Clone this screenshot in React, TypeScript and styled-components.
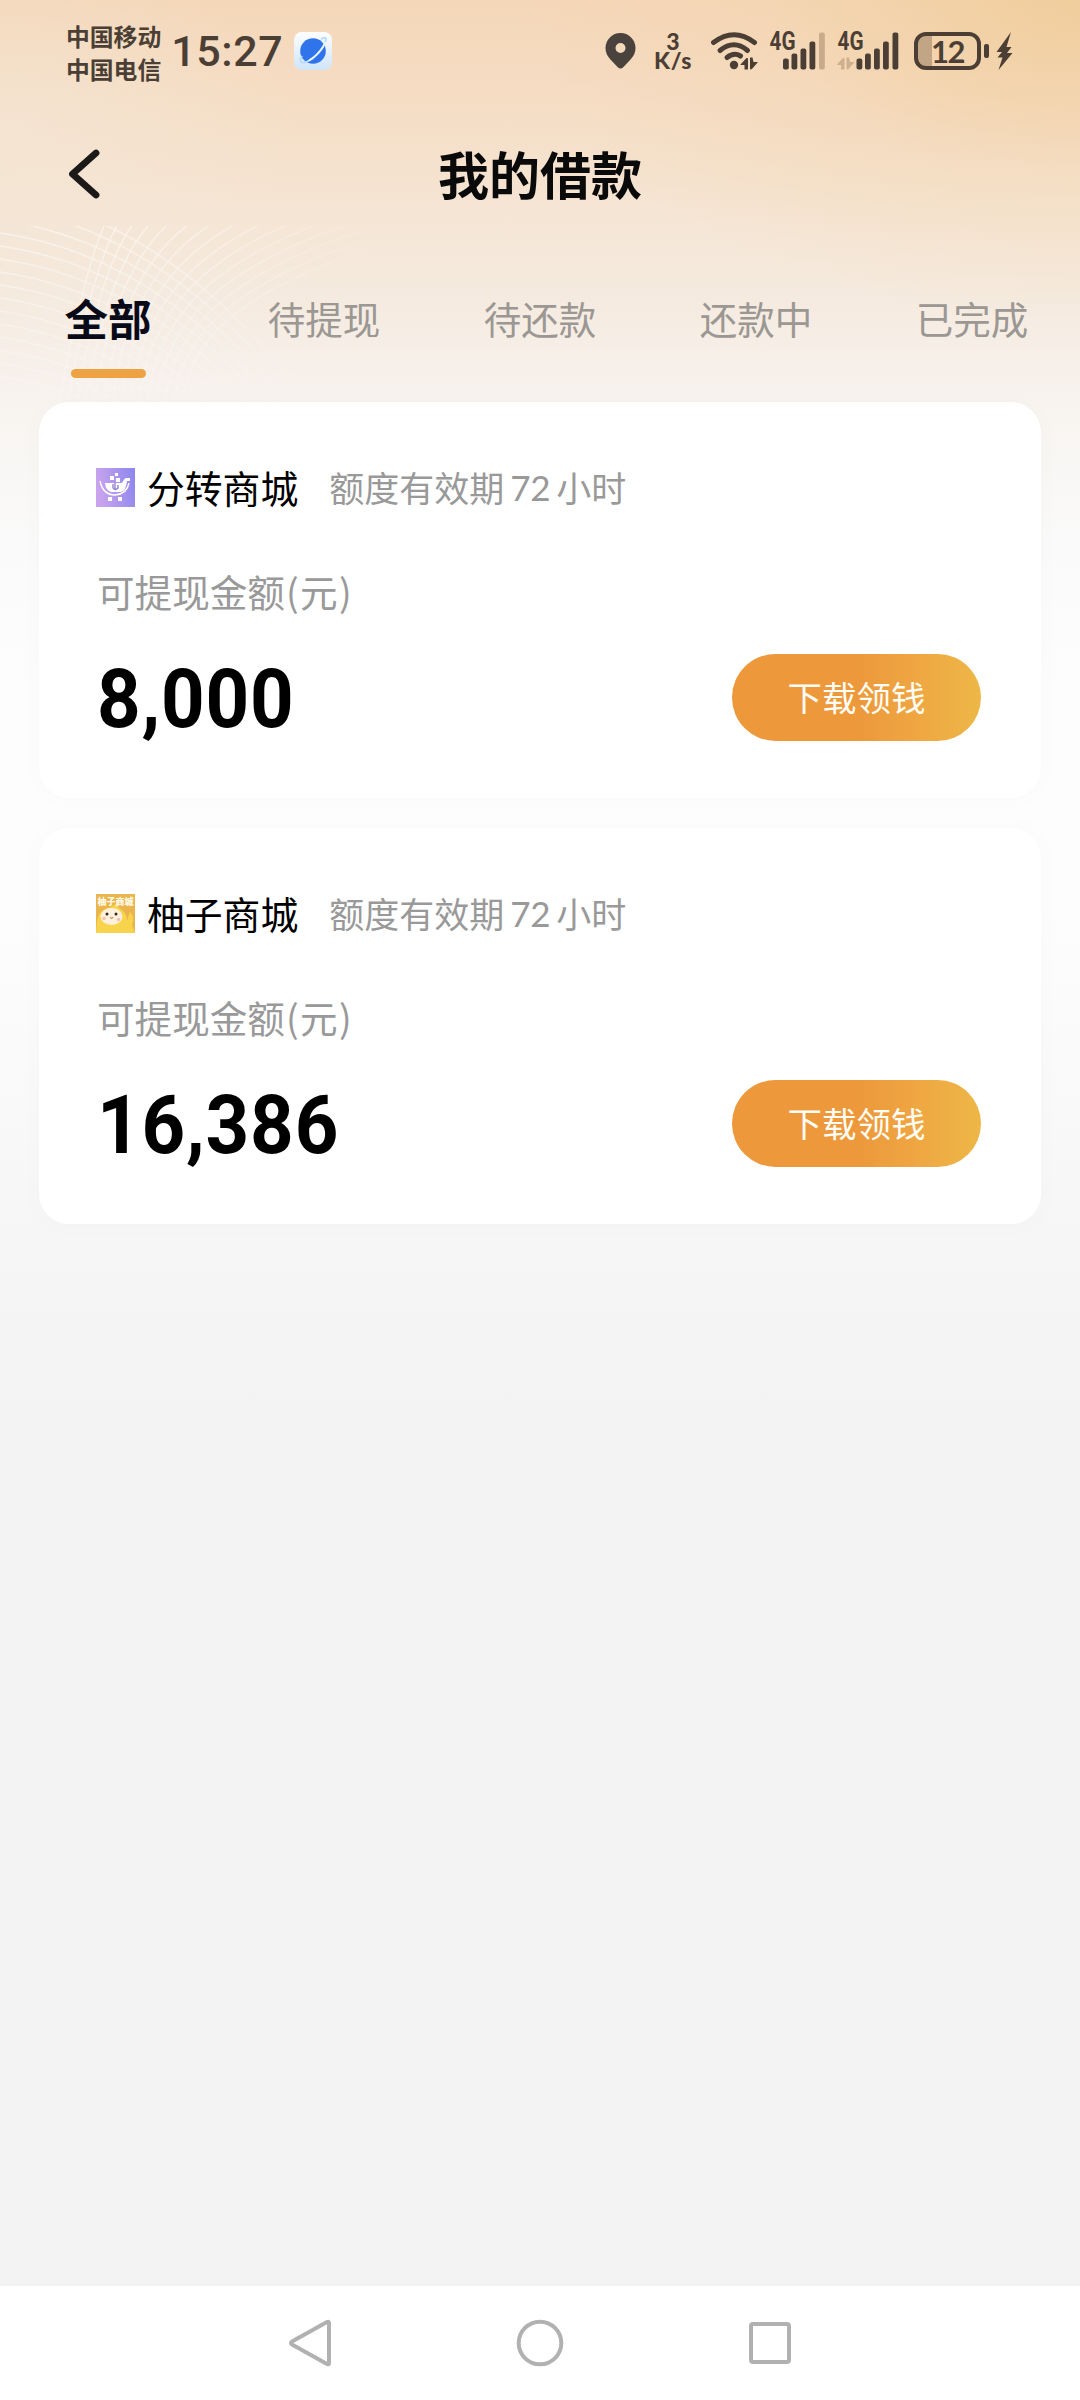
import React from "react";
import styled, { createGlobalStyle } from "styled-components";

const INK = "#4b3f35";
const CJK = `"Noto Sans CJK SC", sans-serif`;

const GlobalStyle = createGlobalStyle`
  * { box-sizing: border-box; }
  body { margin: 0; background: #f2f2f2; }
  button { border: 0; padding: 0; background: none; font: inherit; }
`;

const Screen = styled.div`
  position: relative;
  display: flex;
  flex-direction: column;
  width: 1080px;
  height: 2400px;
  overflow: hidden;
  font-family: ${CJK};
  background:
    radial-gradient(ellipse 560px 320px at 1080px 0, rgba(240, 203, 150, 0.8), rgba(242, 210, 168, 0.3) 55%, rgba(244, 220, 190, 0) 100%),
    radial-gradient(ellipse 300px 180px at 0 130px, rgba(243, 231, 215, 0.6), rgba(243, 231, 215, 0) 100%),
    linear-gradient(180deg, #f4d7b8 0, #f5dcc3 90px, #f5e2ce 170px, #f5e7d8 240px, #f5ebe1 310px, #f7f0ea 370px,
      #f8f5f1 420px, #fafafa 540px, #fdfdfd 700px, #fdfdfd 900px, #f9f9f9 1100px, #f6f6f6 1230px, #f3f3f3 1400px);
`;

const Waves = styled.svg`
  position: absolute;
  left: 0;
  top: 226px;
  pointer-events: none;
`;

const StatusBar = styled.header`
  position: relative;
  display: flex;
  align-items: center;
  height: 102px;
  padding: 0 67px 0 66px;
  color: ${INK};
`;

const Carriers = styled.div`
  display: flex;
  flex-direction: column;
  font-size: 23.8px;
  line-height: 33px;
  font-weight: 700;
  padding-top: 2px;
`;

const Clock = styled.time`
  margin-left: 10px;
  width: 113px;
  font-family: Roboto, sans-serif;
  font-size: 43px;
  line-height: 50px;
  font-weight: 500;
  letter-spacing: 0.6px;
`;

const BrowserIcon = styled.svg`
  margin-left: 10px;
`;

const StatusIcons = styled.div`
  display: flex;
  align-items: center;
  margin-left: auto;
`;

const Speed = styled.div`
  display: flex;
  flex-direction: column;
  align-items: center;
  width: 40px;
  margin: 0 18px 0 17px;
  font-family: Lato, sans-serif;
  font-weight: 900;
  font-size: 23px;
  line-height: 19px;
`;

const SpeedUnit = styled.span`
  letter-spacing: 0.6px;
`;

const SignalIcon = styled.svg`
  margin: -8px 0 0;

  & + & {
    margin-left: 6px;
  }
`;

const SignalLabel = styled.text`
  font-family: Roboto, sans-serif;
  font-weight: 700;
  font-size: 25px;
`;

const WifiIcon = styled.svg`
  margin-right: 10px;
`;

const Battery = styled.div`
  display: flex;
  align-items: center;
  justify-content: center;
  width: 67px;
  height: 38px;
  margin-left: 15px;
  border: 4px solid ${INK};
  border-radius: 12px;
  background: linear-gradient(90deg, #c2a585 0 14px, transparent 14px);
  font-family: Lato, sans-serif;
  font-weight: 700;
  font-size: 31px;
  line-height: 30px;
  letter-spacing: -1.5px;
`;

const BatteryNub = styled.span`
  width: 5px;
  height: 14px;
  margin: 0 7px 0 3px;
  border-radius: 2px;
  background: ${INK};
`;

const TitleBar = styled.div`
  position: relative;
  display: grid;
  grid-template-columns: 120px 1fr 120px;
  align-items: center;
  height: 144px;
`;

const BackButton = styled.button`
  display: flex;
  justify-content: flex-end;
  width: 102px;
`;

const Title = styled.h1`
  margin: 0;
  padding-bottom: 3px;
  text-align: center;
  color: #0a0a0a;
  font-size: 51px;
  line-height: 70px;
  font-weight: 700;
`;

const Tabs = styled.nav`
  position: relative;
  display: grid;
  grid-template-columns: repeat(5, 216px);
  height: 156px;
`;

const Tab = styled.button<{ $active?: boolean }>`
  display: flex;
  flex-direction: column;
  align-items: center;
  justify-content: flex-start;
  padding-top: 42px;
  line-height: 60px;
  font-size: ${(p) => (p.$active ? 43.5 : 37.5)}px;
  font-weight: ${(p) => (p.$active ? 700 : 400)};
  color: ${(p) => (p.$active ? "#080a18" : "#9b9793")};

  &::after {
    content: "";
    display: ${(p) => (p.$active ? "block" : "none")};
    width: 75px;
    height: 9px;
    margin-top: 21px;
    border-radius: 5px;
    background: #eda344;
  }
`;

const LoanList = styled.main`
  position: relative;
  display: flex;
  flex: 1;
  flex-direction: column;
  gap: 30px;
  padding: 0 39px;
`;

const LoanCard = styled.article`
  display: flex;
  flex-direction: column;
  height: 396px;
  padding: 56px 60px 0 57px;
  border-radius: 30px;
  background: #fff;
  box-shadow: 0 0 20px rgba(120, 115, 110, 0.03);
`;

const LoanHead = styled.div`
  display: flex;
  align-items: center;
  height: 58px;
`;

const MallIcon = styled.svg`
  flex: none;
  margin-top: 1px;
`;

const MallName = styled.h2`
  margin: 0 0 0 12px;
  color: #000;
  font-size: 37.8px;
  line-height: 58px;
  font-weight: 400;
`;

const Validity = styled.span`
  display: flex;
  gap: 6px;
  margin-left: 31px;
  color: #999;
  font-size: 35px;
  line-height: 56px;
`;

const Hours = styled.span`
  font-family: Lato, sans-serif;
  letter-spacing: -0.3px;
`;

const AmountLabel = styled.div`
  margin-top: 47px;
  padding-left: 1px;
  color: #999;
  font-size: 37.6px;
  line-height: 56px;
`;

const Unit = styled.span`
  letter-spacing: 1.4px;
  padding-left: 1px;
`;

const LoanFoot = styled.div`
  display: flex;
  align-items: center;
  justify-content: space-between;
  height: 87px;
  margin-top: 35px;
`;

const Amount = styled.strong`
  padding: 3px 0 0 1px;
  font-family: Roboto, sans-serif;
  font-size: 81px;
  line-height: 87px;
  font-weight: 700;
  letter-spacing: 0.9px;
  color: #000;
  transform: scaleX(0.94);
  transform-origin: left center;
`;

const DownloadButton = styled.button`
  width: 249px;
  height: 87px;
  padding-bottom: 2px;
  border-radius: 44px;
  background: linear-gradient(90deg, #ec983b 0, #ec983b 50%, #efa943 78%, #edb747 100%);
  color: #fffdf5;
  font-size: 34.5px;
  line-height: 85px;
`;

const NavBar = styled.footer`
  position: relative;
  display: flex;
  align-items: center;
  justify-content: center;
  gap: 184px;
  height: 114px;
  background: #fff;
`;

const curveSteps = Array.from({ length: 15 }, (_, i) => i);

const WavePattern = () => (
  <Waves width="480" height="180" viewBox="0 0 480 180" fill="none">
    <defs>
      <linearGradient id="waveFade" x1="0" y1="0" x2="480" y2="0" gradientUnits="userSpaceOnUse">
        <stop offset="0" stopColor="#fff" stopOpacity="0.8" />
        <stop offset="0.4" stopColor="#fff" stopOpacity="0.65" />
        <stop offset="0.85" stopColor="#fff" stopOpacity="0" />
      </linearGradient>
      <linearGradient id="depthFade" x1="0" y1="0" x2="0" y2="1">
        <stop offset="0" stopColor="#a0a0a0" />
        <stop offset="1" stopColor="#333" />
      </linearGradient>
      <mask id="depth">
        <rect width="480" height="180" fill="url(#depthFade)" />
      </mask>
    </defs>
    <g stroke="url(#waveFade)" strokeWidth="1.6" mask="url(#depth)">
      {curveSteps.map((i) => (
        <path key={`a${i}`} d={`M0 ${-32 + i * 13} Q${165 - i * 2} ${-10 + i * 13} ${300 - i * 5} ${165 + i * 8}`} />
      ))}
      {curveSteps.map((i) => (
        <path
          key={`b${i}`}
          d={`M${104 + i * 12 + i * i * 0.9} 0 Q${84 + i * 7} ${45 + i * 1.5} ${58 + i * 9} 180`}
        />
      ))}
    </g>
  </Waves>
);

const DataArrows = ({ x, y, color }: { x: number; y: number; color: string }) => (
  <g transform={`translate(${x} ${y})`} fill={color}>
    <path d="M0 7 L6 0.5 Q7.5 0 7.5 1.5 V12 H4 V7.5 H0Z" />
    <path d="M9.5 0 H12 L13 4.5 H17.5 L11.5 11.5 Q9.5 12.5 9.5 11Z" />
  </g>
);

const Signal = ({ weak }: { weak?: boolean }) => {
  const bars = [
    { x: 19.5, h: 11 },
    { x: 28, h: 16 },
    { x: 37, h: 21 },
    { x: 46, h: 28 },
    { x: 55.5, h: 37 },
  ];
  return (
    <SignalIcon width="62" height="46" viewBox="0 -8 62 46">
      <SignalLabel x="0.5" y="18" fill={INK} textLength="26" lengthAdjust="spacingAndGlyphs">
        4G
      </SignalLabel>
      {!weak && <DataArrows x={0} y={25.5} color="#cdb08d" />}
      {bars.map((b, i) => (
        <rect
          key={b.x}
          x={weak ? b.x - 5.5 : b.x}
          y={37.5 - b.h}
          width="5.8"
          height={b.h}
          rx="2"
          fill={weak && i === 4 ? "#c7ab8a" : INK}
        />
      ))}
    </SignalIcon>
  );
};

const FenzhuanIcon = () => (
  <MallIcon width="39" height="39" viewBox="0 0 39 39">
    <defs>
      <linearGradient id="mallPurple" x1="0" y1="0.2" x2="1" y2="0">
        <stop offset="0" stopColor="#c8a3ee" />
        <stop offset="1" stopColor="#8c86ee" />
      </linearGradient>
    </defs>
    <rect width="39" height="39" fill="url(#mallPurple)" />
    <path d="M4 13 Q7 27 19 27 Q31 26 33 15" fill="none" stroke="#fff" strokeWidth="1.4" />
    <path d="M9 15 H26 L28.5 11 Q29 10 30.5 10 H34 V13 H31 Q30 23 25 24 H15 Q10 23 9 15Z" fill="#fff" />
    <path d="M17 16 V20 Q19 23 22 20 V17 M19 15 V22" stroke="#8b78cf" strokeWidth="1.3" fill="none" />
    <path d="M14 8h4v4h-4zM19 5h3v3h-3zM20 10h4v4h-4zM12 29h4v4h-4zM22 29h4v4h-4z" fill="#fff" />
  </MallIcon>
);

const YouziIcon = () => (
  <MallIcon width="39" height="39" viewBox="0 0 39 39">
    <rect width="39" height="39" fill="#eab54c" />
    <path d="M0 39 L1 27 Q3 15 15 13 L21 9 L23 14 Q31 18 31 27 L34 18 Q39 22 36 31 L39 39Z" fill="#f8d44c" />
    <ellipse cx="15.5" cy="22.5" rx="11" ry="8.5" fill="#fff0dc" />
    <circle cx="11" cy="20" r="1.5" fill="#332a26" />
    <circle cx="20" cy="20" r="1.5" fill="#332a26" />
    <path d="M14 23.5 Q15.5 25 17 23.5" fill="none" stroke="#a75b37" />
    <circle cx="8" cy="24.5" r="1.7" fill="#f7bfae" />
    <circle cx="22.5" cy="25.5" r="1.7" fill="#f7bfae" />
    <text x="1.5" y="10.5" fontSize="9" fontWeight="900" fill="#fff9e8" fontFamily={CJK}>
      柚子商城
    </text>
  </MallIcon>
);

interface Loan {
  name: string;
  amount: string;
  icon: React.ReactNode;
}

const loans: Loan[] = [
  { name: "分转商城", amount: "8,000", icon: <FenzhuanIcon /> },
  { name: "柚子商城", amount: "16,386", icon: <YouziIcon /> },
];

const tabs = ["全部", "待提现", "待还款", "还款中", "已完成"];

export default function App() {
  return (
    <Screen>
      <GlobalStyle />
      <WavePattern />
      <StatusBar>
        <Carriers>
          <span>中国移动</span>
          <span>中国电信</span>
        </Carriers>
        <Clock>15:27</Clock>
        <BrowserIcon width="38" height="38" viewBox="0 0 38 38">
          <defs>
            <linearGradient id="tile" x1="0" y1="0" x2="0" y2="1">
              <stop offset="0" stopColor="#fdfeff" />
              <stop offset="1" stopColor="#cfe5fa" />
            </linearGradient>
          </defs>
          <rect width="38" height="38" rx="8" fill="url(#tile)" />
          <circle cx="19" cy="19" r="12.8" fill="#2f74ea" />
          <path d="M27 7 Q33 4 31.5 9 Q29 18 18 27 Q8 33 6.5 29 Q6 27 8 24" fill="none" stroke="#b9dcfb" strokeWidth="2" />
          <path d="M31.5 10 Q27 21 15 28.5" fill="none" stroke="#f4faff" strokeWidth="1.6" />
        </BrowserIcon>
        <StatusIcons>
          <svg width="31" height="36" viewBox="0 0 31 36">
            <path
              fillRule="evenodd"
              fill="#49423d"
              d="M15.5 0 A15 15 0 0 1 30.5 15 Q30.5 21 26 26 L18.5 34 Q15.5 37 12.5 34 L5 26 Q0.5 21 0.5 15 A15 15 0 0 1 15.5 0Z M15.5 10 A5 5 0 1 0 15.5 20 A5 5 0 1 0 15.5 10Z"
            />
          </svg>
          <Speed>
            <span>3</span>
            <SpeedUnit>K/s</SpeedUnit>
          </Speed>
          <WifiIcon width="48" height="38" viewBox="0 0 48 38" fill="none" stroke={INK} strokeWidth="5" strokeLinecap="round">
            <path d="M2.5 10.5 Q23 -5 43.5 10.5" />
            <path d="M9 18.500 Q23 7 36.5 18.500" />
            <path d="M16 25.5 Q23 20 29.5 24" />
            <circle cx="23" cy="33" r="4.2" fill={INK} stroke="none" />
            <g stroke="none">
              <DataArrows x={29.5} y={25.5} color={INK} />
            </g>
          </WifiIcon>
          <Signal weak />
          <Signal />
          <Battery>12</Battery>
          <BatteryNub />
          <svg width="17" height="38" viewBox="0 0 17 38">
            <path d="M15 0 L0.5 20 H6 L1.5 25.500 H6.500 L2.5 38 L16.500 21 H11 L15.500 15 H10.500Z" fill={INK} />
          </svg>
        </StatusIcons>
      </StatusBar>

      <TitleBar>
        <BackButton aria-label="返回">
          <svg width="34" height="52" viewBox="0 0 34 52" fill="none">
            <path d="M28 5 L4.500 26 L28 47" stroke="#1b1a18" strokeWidth="6.8" strokeLinecap="round" strokeLinejoin="round" />
          </svg>
        </BackButton>
        <Title>我的借款</Title>
      </TitleBar>

      <Tabs>
        {tabs.map((label, i) => (
          <Tab key={label} $active={i === 0}>
            {label}
          </Tab>
        ))}
      </Tabs>

      <LoanList>
        {loans.map((loan) => (
          <LoanCard key={loan.name}>
            <LoanHead>
              {loan.icon}
              <MallName>{loan.name}</MallName>
              <Validity>
                <span>额度有效期</span>
                <Hours>72</Hours>
                <span>小时</span>
              </Validity>
            </LoanHead>
            <AmountLabel>
              可提现金额<Unit>(元)</Unit>
            </AmountLabel>
            <LoanFoot>
              <Amount>{loan.amount}</Amount>
              <DownloadButton>下载领钱</DownloadButton>
            </LoanFoot>
          </LoanCard>
        ))}
      </LoanList>

      <NavBar>
        <svg width="44" height="50" viewBox="0 0 44 50" fill="none" stroke="#b1b1b1" strokeWidth="4" strokeLinejoin="round">
          <path d="M41 5 V45 Q41 47 39 46 L4 26.5 Q2 25 4 23.5 L39 4 Q41 3 41 5Z" />
        </svg>
        <svg width="48" height="48" viewBox="0 0 48 48" fill="none" stroke="#b1b1b1" strokeWidth="4">
          <circle cx="24" cy="24" r="21.3" />
        </svg>
        <svg width="44" height="44" viewBox="0 0 44 44" fill="none" stroke="#b1b1b1" strokeWidth="4">
          <rect x="3" y="3" width="38" height="38" rx="2" />
        </svg>
      </NavBar>
    </Screen>
  );
}
